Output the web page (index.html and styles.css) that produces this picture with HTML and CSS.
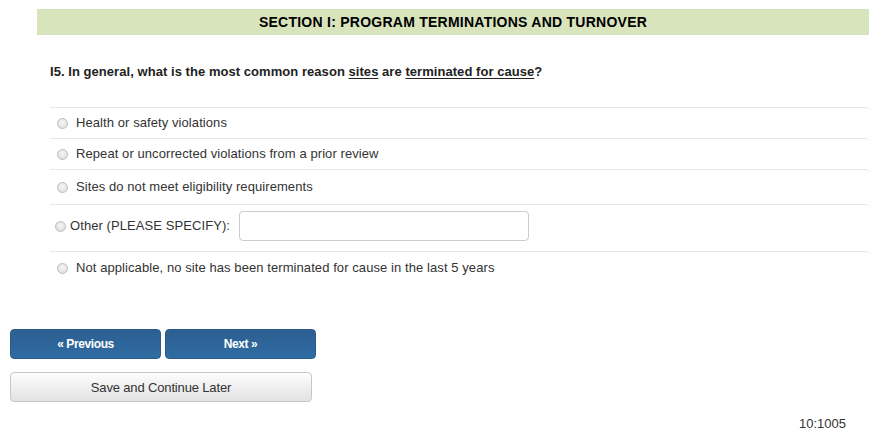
FILE: index.html
```html
<!DOCTYPE html>
<html lang="en">
<head>
    <meta charset="UTF-8">
    <meta name="viewport" content="width=device-width, initial-scale=1.0">
    <title>Section I: Program Terminations and Turnover</title>
    <link rel="stylesheet" href="styles.css">
</head>
<body>

    <div class="survey">
        <div class="section-header">SECTION I: PROGRAM TERMINATIONS AND TURNOVER</div>

        <div class="question">
            <p class="question-text">I5. In general, what is the most common reason <u>sites</u> are <u>terminated for cause</u>?</p>

            <div class="options">
                <label class="option">
                    <input type="radio" name="i5" value="1">
                    <span>Health or safety violations</span>
                </label>
                <label class="option">
                    <input type="radio" name="i5" value="2">
                    <span>Repeat or uncorrected violations from a prior review</span>
                </label>
                <label class="option option-tall">
                    <input type="radio" name="i5" value="3">
                    <span>Sites do not meet eligibility requirements</span>
                </label>
                <div class="option option-other">
                    <input type="radio" name="i5" value="4" id="i5-other">
                    <label for="i5-other">Other (PLEASE SPECIFY):</label>
                    <input type="text" class="specify" id="i5-specify">
                </div>
                <label class="option option-last">
                    <input type="radio" name="i5" value="5">
                    <span>Not applicable, no site has been terminated for cause in the last 5 years</span>
                </label>
            </div>
        </div>
    </div>

    <div class="nav">
        <div class="nav-row">
            <button class="btn btn-primary">&laquo; Previous</button>
            <button class="btn btn-primary">Next &raquo;</button>
        </div>
        <button class="btn btn-default">Save and Continue Later</button>
    </div>

    <div class="page-id">10:1005</div>

</body>
</html>
```

FILE: styles.css
```css
body {
    margin: 0;
    font-family: "Liberation Sans", Arial, sans-serif;
    font-size: 13px;
    color: #333;
    background: #fff;
}
.survey {
    padding: 9px 6px 0 37px;
}
.section-header {
    background-color: #d8e4bc;
    height: 26px;
    line-height: 27px;
    text-align: center;
    font-weight: bold;
    font-size: 14px;
    letter-spacing: 0.25px;
    color: #000;
}
.question {
    padding-left: 13px;
}
.question-text {
    margin: 0;
    padding: 29px 0 0;
    height: 43px;
    font-weight: bold;
    font-size: 13px;
    letter-spacing: 0.05px;
    color: #222;
}
.question-text u {
    text-underline-offset: 2px;
}
.options {
    display: flex;
    flex-direction: column;
}
.option {
    display: flex;
    align-items: center;
    gap: 8px;
    padding: 8px 0 8px 7px;
    line-height: 14px;
    letter-spacing: 0.08px;
    border-top: 1px solid #e6e6e6;
    border-radius: 0 4px 0 0;
}
.option-tall {
    padding: 10px 0 10px 7px;
}
.option-other {
    padding: 6px 0 10px 5px;
    gap: 4px;
}
.option-other label {
    margin-right: 5px;
}
.option-last {
    padding-top: 9px;
}
.option input[type="radio"] {
    appearance: none;
    -webkit-appearance: none;
    width: 11px;
    height: 11px;
    margin: 0;
    border: 1px solid #bdbdbd;
    border-radius: 50%;
    background: radial-gradient(circle at 50% 40%, #f6f6f6, #d9d9d9);
    flex-shrink: 0;
}
.specify {
    width: 290px;
    height: 30px;
    box-sizing: border-box;
    border: 1px solid #ccc;
    border-radius: 4px;
    padding: 4px 8px;
    font-family: inherit;
    font-size: 13px;
}
.nav {
    padding: 46px 0 0 10px;
    width: 306px;
}
.nav-row {
    display: flex;
    gap: 4px;
    margin-bottom: 13px;
}
.btn {
    display: block;
    height: 30px;
    border-radius: 4px;
    font-family: "Liberation Sans", Arial, sans-serif;
    cursor: pointer;
}
.btn-primary {
    width: 151px;
    color: #fff;
    font-size: 12px;
    font-weight: bold;
    letter-spacing: -0.4px;
    border: 1px solid #2b5a88;
    background: linear-gradient(#2d5f91, #2f6ca3);
}
.btn-default {
    width: 302px;
    color: #333;
    font-size: 13px;
    letter-spacing: -0.15px;
    border: 1px solid #c8c8c8;
    background: linear-gradient(#fdfdfd, #e2e2e2);
}
.page-id {
    text-align: right;
    padding: 14px 29px 0 0;
}
```
